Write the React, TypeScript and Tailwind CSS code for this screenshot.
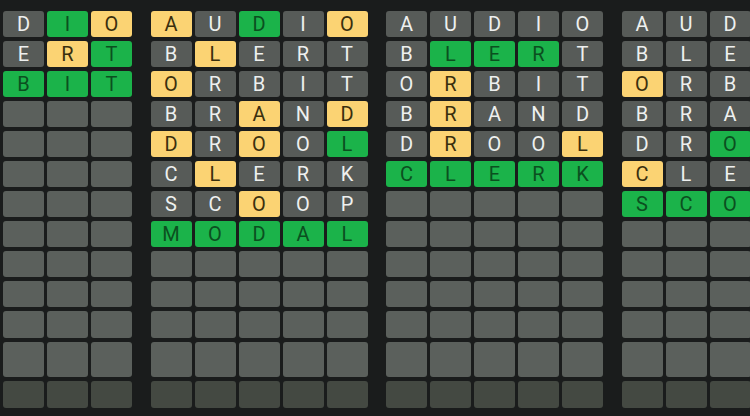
import React from 'react';

type Mark = 'g' | 'y' | 'x';

// each board: list of [word, marks] for filled rows; remaining rows are empty
const boards: { rows: { word: string; marks: string }[]; cols: number[] }[] = [
  {
    cols: [2, 3, 4],
    rows: [
      { word: 'AUDIO', marks: 'xxxgy' },
      { word: 'BLERT', marks: 'xxxyg' },
      { word: 'ORBIT', marks: 'ggggg' },
    ],
  },
  {
    cols: [0, 1, 2, 3, 4],
    rows: [
      { word: 'AUDIO', marks: 'yxgxy' },
      { word: 'BLERT', marks: 'xyxxx' },
      { word: 'ORBIT', marks: 'yxxxx' },
      { word: 'BRAND', marks: 'xxyxy' },
      { word: 'DROOL', marks: 'yxyxg' },
      { word: 'CLERK', marks: 'xyxxx' },
      { word: 'SCOOP', marks: 'xxyxx' },
      { word: 'MODAL', marks: 'ggggg' },
    ],
  },
  {
    cols: [0, 1, 2, 3, 4],
    rows: [
      { word: 'AUDIO', marks: 'xxxxx' },
      { word: 'BLERT', marks: 'xgggx' },
      { word: 'ORBIT', marks: 'xyxxx' },
      { word: 'BRAND', marks: 'xyxxx' },
      { word: 'DROOL', marks: 'xyxxy' },
      { word: 'CLERK', marks: 'ggggg' },
    ],
  },
  {
    cols: [0, 1, 2],
    rows: [
      { word: 'AUDIO', marks: 'xxxxx' },
      { word: 'BLERT', marks: 'xxxxx' },
      { word: 'ORBIT', marks: 'yxxxx' },
      { word: 'BRAND', marks: 'xxxxx' },
      { word: 'DROOL', marks: 'xxgxx' },
      { word: 'CLERK', marks: 'yxxxx' },
      { word: 'SCOOP', marks: 'ggggg' },
    ],
  },
];

// row heights (last rows stretch a little in the capture)
const rowHeights = ['h-[26px]', 'h-[26px]', 'h-[26px]', 'h-[26px]', 'h-[26px]', 'h-[26px]', 'h-[26px]', 'h-[26px]', 'h-[26px]', 'h-[26px]', 'h-[27px]', 'h-[35px]', 'h-[27px]'];

const tileStyle: Record<Mark, string> = {
  g: 'bg-[#1bb34a] text-[#0b4f1f]',
  y: 'bg-[#fbd373] text-[#3a2f0e]',
  x: 'bg-[#575b58] text-[#eef0ef]',
};

const Tile = ({ letter, mark, last }: { letter?: string; mark?: Mark; last: boolean }) => {
  if (!letter) {
    return (
      <div className={`w-[41px] rounded-[3px] ${last ? 'bg-[#444942]' : 'bg-[#5b605c]'}`} />
    );
  }
  return (
    <div className={`w-[41px] rounded-[3px] flex items-center justify-center text-[20px] leading-none ${tileStyle[mark!]}`}>
      {letter}
    </div>
  );
};

const Board = ({ rows, cols }: { rows: { word: string; marks: string }[]; cols: number[] }) => (
  <div className="flex flex-col gap-[4px] shrink-0">
    {rowHeights.map((h, r) => {
      const row = rows[r];
      return (
        <div key={r} className={`flex gap-[3px] ${h}`}>
          {cols.map((c) => (
            <Tile
              key={c}
              letter={row?.word[c]}
              mark={row?.marks[c] as Mark}
              last={r === rowHeights.length - 1}
            />
          ))}
        </div>
      );
    })}
  </div>
);

export default function App() {
  return (
    <div
      className="w-[750px] h-[416px] overflow-hidden bg-[#1a1c1c]"
      style={{ fontFamily: 'Roboto, "Noto Sans", sans-serif' }}
    >
      <div className="flex gap-[18.5px] pt-[11px] pl-[3px]">
        {boards.map((b, i) => (
          <Board key={i} rows={b.rows} cols={b.cols} />
        ))}
      </div>
    </div>
  );
}
